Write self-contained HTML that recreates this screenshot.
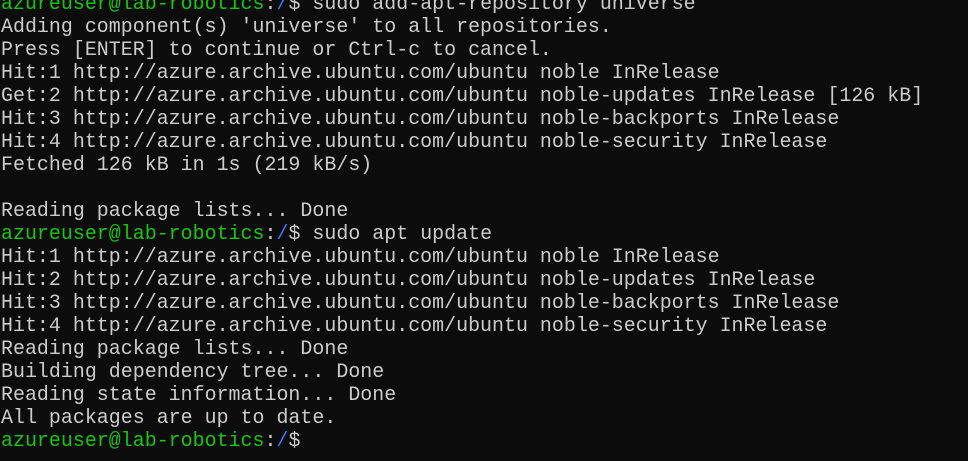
<!DOCTYPE html>
<html><head><meta charset="utf-8"><style>
html,body{margin:0;padding:0;background:#0c0c0c;width:968px;height:461px;overflow:hidden}
pre{position:absolute;left:1px;top:-8px;margin:0;font-family:"Liberation Mono",monospace;font-size:19.9px;letter-spacing:0.04px;line-height:23px;color:#cccccc;white-space:pre}
.g{color:#16c60c}.b{color:#3b78ff}
</style></head><body><pre><span class="g">azureuser@lab-robotics</span>:<span class="b">/</span>$ sudo add-apt-repository universe
Adding component(s) 'universe' to all repositories.
Press [ENTER] to continue or Ctrl-c to cancel.
Hit:1 http://azure.archive.ubuntu.com/ubuntu noble InRelease
Get:2 http://azure.archive.ubuntu.com/ubuntu noble-updates InRelease [126 kB]
Hit:3 http://azure.archive.ubuntu.com/ubuntu noble-backports InRelease
Hit:4 http://azure.archive.ubuntu.com/ubuntu noble-security InRelease
Fetched 126 kB in 1s (219 kB/s)

Reading package lists... Done
<span class="g">azureuser@lab-robotics</span>:<span class="b">/</span>$ sudo apt update
Hit:1 http://azure.archive.ubuntu.com/ubuntu noble InRelease
Hit:2 http://azure.archive.ubuntu.com/ubuntu noble-updates InRelease
Hit:3 http://azure.archive.ubuntu.com/ubuntu noble-backports InRelease
Hit:4 http://azure.archive.ubuntu.com/ubuntu noble-security InRelease
Reading package lists... Done
Building dependency tree... Done
Reading state information... Done
All packages are up to date.
<span class="g">azureuser@lab-robotics</span>:<span class="b">/</span>$</pre></body></html>
